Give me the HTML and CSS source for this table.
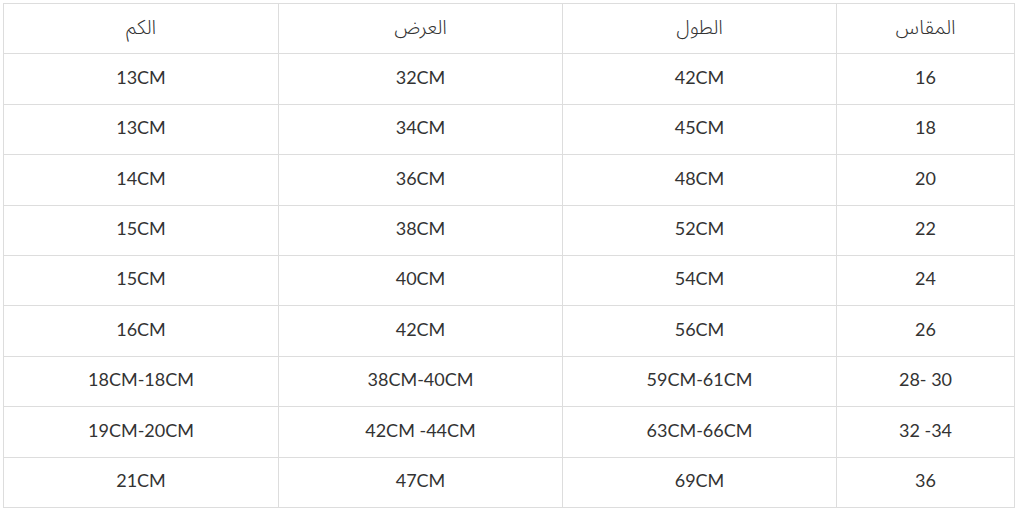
FILE: index.html
```html
<!DOCTYPE html>
<html lang="ar">
<head>
<meta charset="utf-8">
<link rel="stylesheet" href="styles.css">
</head>
<body>
<table class="size-table" dir="rtl">
  <colgroup>
    <col class="c-size"><col class="c-len"><col class="c-wid"><col class="c-sleeve">
  </colgroup>
  <thead>
    <tr><th>المقاس</th><th>الطول</th><th>العرض</th><th>الكم</th></tr>
  </thead>
  <tbody>
    <tr><td><bdi>16</bdi></td><td>42CM</td><td>32CM</td><td>13CM</td></tr>
    <tr><td><bdi>18</bdi></td><td>45CM</td><td>34CM</td><td>13CM</td></tr>
    <tr><td><bdi>20</bdi></td><td>48CM</td><td>36CM</td><td>14CM</td></tr>
    <tr><td><bdi>22</bdi></td><td>52CM</td><td>38CM</td><td>15CM</td></tr>
    <tr><td><bdi>24</bdi></td><td>54CM</td><td>40CM</td><td>15CM</td></tr>
    <tr><td><bdi>26</bdi></td><td>56CM</td><td>42CM</td><td>16CM</td></tr>
    <tr><td><bdi class="ltr">28- 30</bdi></td><td><bdi class="ltr">59CM-61CM</bdi></td><td><bdi class="ltr">38CM-40CM</bdi></td><td><bdi class="ltr">18CM-18CM</bdi></td></tr>
    <tr><td><bdi class="ltr">32 -34</bdi></td><td><bdi class="ltr">63CM-66CM</bdi></td><td><bdi class="ltr">42CM -44CM</bdi></td><td><bdi class="ltr">19CM-20CM</bdi></td></tr>
    <tr><td><bdi>36</bdi></td><td>69CM</td><td>47CM</td><td>21CM</td></tr>
  </tbody>
</table>
</body>
</html>
```

FILE: styles.css
```css
html, body {
  margin: 0;
  padding: 0;
  background: #ffffff;
}
body {
  padding: 3px;
  font-family: Lato, "Noto Sans Arabic", "Noto Sans", "DejaVu Sans", sans-serif;
  color: #333333;
}
.size-table {
  width: 1011px;
  border-collapse: collapse;
  table-layout: fixed;
}
.c-size { width: 178px; }
.c-len { width: 274px; }
.c-wid { width: 284px; }
.c-sleeve { width: 275px; }
.size-table th,
.size-table td {
  border: 1px solid #dddddd;
  height: 46.4px;
  padding: 0 0 3px 0;
  text-align: center;
  vertical-align: middle;
  font-size: 18px;
  font-weight: 400;
  line-height: 1.2;
}
.size-table th {
  font-size: 20px;
  font-weight: 300;
  height: 44.4px;
  padding-bottom: 5px;
}
.ltr {
  direction: ltr;
  unicode-bidi: isolate;
}
```
